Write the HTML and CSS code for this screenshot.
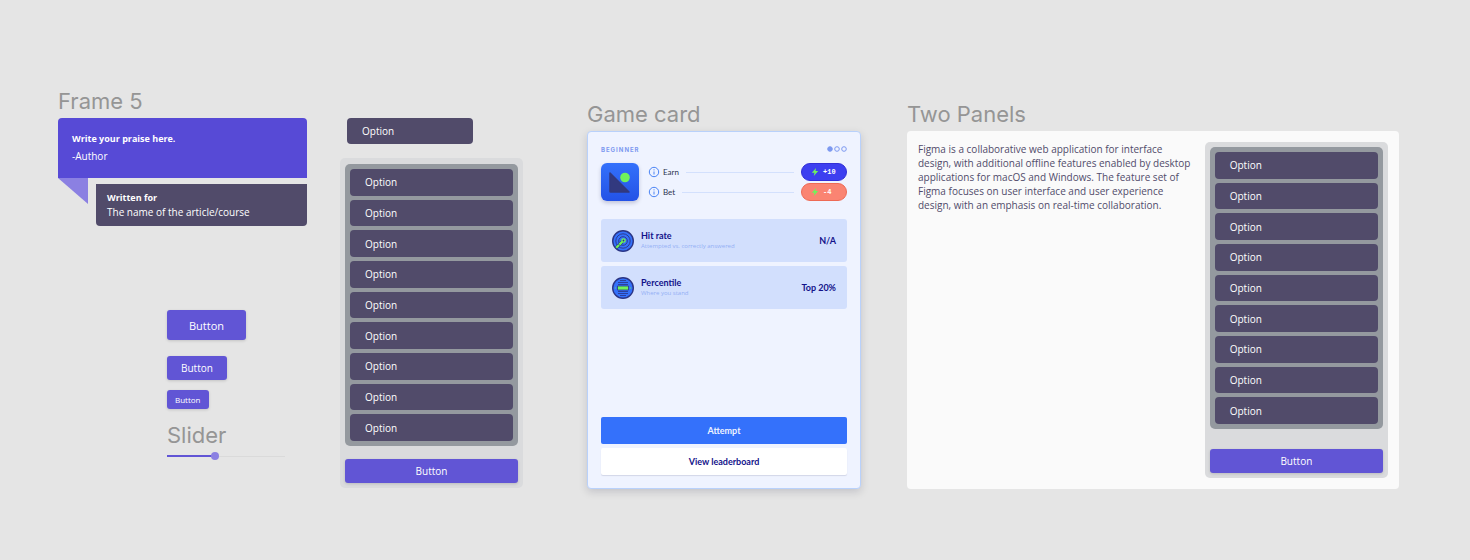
FILE: index.html
```
<!DOCTYPE html>
<html lang="en">
<head>
  <meta charset="UTF-8">
  <meta name="viewport" content="width=device-width, initial-scale=1.0">
  <title>Components</title>
  <link rel="stylesheet" href="styles.css">
</head>
<body>
<main class="board">
  <section class="col col-basics">
    <h2 class="frame-title">Frame 5</h2>
    <div class="praise">
      <p class="praise-text">Write your praise here.</p>
      <p class="praise-author">-Author</p>
    </div>
    <div class="praise-footer">
      <svg class="praise-tail" viewBox="0 0 30 26"><path d="M0 0h30v26z" fill="#8b80e2"/></svg>
      <div class="written-for">
        <strong>Written for</strong>
        <p>The name of the article/course</p>
      </div>
    </div>
    <div class="controls">
      <button class="btn btn-large">Button</button>
      <button class="btn btn-medium">Button</button>
      <button class="btn btn-small">Button</button>
      <label class="frame-title" for="slider">Slider</label>
      <input class="slider" id="slider" type="range" min="0" max="100" value="40">
    </div>
  </section>

  <section class="col col-menu">
    <button class="option option-single">Option</button>
    <div class="panel">
      <div class="option-list">
        <button class="option">Option</button>
        <button class="option">Option</button>
        <button class="option">Option</button>
        <button class="option">Option</button>
        <button class="option">Option</button>
        <button class="option">Option</button>
        <button class="option">Option</button>
        <button class="option">Option</button>
        <button class="option">Option</button>
      </div>
      <button class="btn btn-block">Button</button>
    </div>
  </section>

  <section class="col col-game">
    <h2 class="frame-title">Game card</h2>
    <div class="game-card">
      <div class="game-top">
        <span class="level">BEGINNER</span>
        <svg class="dots" width="20" height="6" viewBox="0 0 20 6" fill="none" stroke="#7d99f0">
          <circle cx="3" cy="3" r="2.3" fill="#7d99f0"/>
          <circle cx="10" cy="3" r="2.3"/>
          <circle cx="17" cy="3" r="2.3"/>
        </svg>
      </div>
      <div class="game-info">
        <div class="game-logo">
          <svg width="38" height="38" viewBox="0 0 38 38">
            <path d="M9 10v18.500q0 .5.500.500h18.500z" fill="#32397f" stroke="#32397f" stroke-width="1.500" stroke-linejoin="round"/>
            <circle cx="24" cy="14.500" r="4.800" fill="#70f35c"/>
          </svg>
        </div>
        <div class="stakes">
          <div class="stake">
            <svg class="info-icon" viewBox="0 0 12 12" fill="none" stroke="#4a83f5"><circle cx="6" cy="6" r="4.700"/><path d="M6 5.500v3M6 3.300v1.100"/></svg>
            <span>Earn</span>
            <hr>
            <span class="pill pill-earn">
              <svg viewBox="0 0 8 8"><path d="M5 0 .8 4.800h2.700L2.800 8l4.400-4.900H4.500z" fill="#70f35c"/></svg>+10
            </span>
          </div>
          <div class="stake">
            <svg class="info-icon" viewBox="0 0 12 12" fill="none" stroke="#4a83f5"><circle cx="6" cy="6" r="4.700"/><path d="M6 5.500v3M6 3.300v1.100"/></svg>
            <span>Bet</span>
            <hr>
            <span class="pill pill-bet">
              <svg viewBox="0 0 8 8"><path d="M5 0 .8 4.800h2.700L2.800 8l4.400-4.900H4.500z" fill="#70f35c"/></svg>-4
            </span>
          </div>
        </div>
      </div>
      <div class="stats">
        <div class="stat">
          <svg class="stat-icon" viewBox="0 0 22 22" fill="none" stroke="#2b3585">
            <circle cx="11" cy="11" r="10.300" fill="#3471fb" stroke-width="1.400"/>
            <circle cx="11" cy="11" r="7.200" stroke-width=".9"/>
            <circle cx="11" cy="11" r="4.300" stroke-width=".9"/>
            <path d="M4.200 17.800 11 11" stroke-width="3.200"/>
            <path d="M4.200 17.800 10.500 11.500" stroke="#70f35c" stroke-width="2.200" stroke-dasharray="4 .5"/>
            <circle cx="11.500" cy="10.500" r="1.600" fill="#2b3585" stroke="#70f35c" stroke-width="1.400"/>
          </svg>
          <div class="stat-text">
            <h3>Hit rate</h3>
            <p>Attempted vs. correctly answered</p>
          </div>
          <span class="stat-value">N/A</span>
        </div>
        <div class="stat">
          <svg class="stat-icon" viewBox="0 0 22 22" fill="none" stroke="#2b3585">
            <circle cx="11" cy="11" r="10.300" fill="#3471fb" stroke-width="1.400"/>
            <path d="M8 3.500h6M6 5.500h10M6 7.500h10M6 14.500h10M6 16.500h10M8 18.500h6" stroke-width=".8"/>
            <path d="M5.500 9h11v4h-11z" fill="#70f35c" stroke-width=".8"/>
            <path d="M2.800 11h1M18.200 11h1" stroke="#70f35c"/>
          </svg>
          <div class="stat-text">
            <h3>Percentile</h3>
            <p>Where you stand</p>
          </div>
          <span class="stat-value">Top 20%</span>
        </div>
      </div>
      <div class="game-actions">
        <button class="attempt">Attempt</button>
        <button class="leaderboard">View leaderboard</button>
      </div>
    </div>
  </section>

  <section class="col col-panels">
    <h2 class="frame-title">Two Panels</h2>
    <div class="two-panels">
      <p class="article">Figma is a collaborative web application for interface design, with additional offline features enabled by desktop applications for macOS and Windows. The feature set of Figma focuses on user interface and user experience design, with an emphasis on real-time collaboration.</p>
      <div class="panel">
        <div class="option-list">
          <button class="option">Option</button>
          <button class="option">Option</button>
          <button class="option">Option</button>
          <button class="option">Option</button>
          <button class="option">Option</button>
          <button class="option">Option</button>
          <button class="option">Option</button>
          <button class="option">Option</button>
          <button class="option">Option</button>
        </div>
        <button class="btn btn-block">Button</button>
      </div>
    </div>
  </section>
</main>
</body>
</html>
```
FILE: styles.css
```
* {
  box-sizing: border-box;
}

body {
  margin: 0;
  background-color: #e5e5e5;
  font-family: 'Open Sans', sans-serif;
  font-size: 10px;
}

h2, h3, p {
  margin: 0;
}

button {
  border: none;
  font-family: inherit;
  cursor: pointer;
}

.board {
  display: flex;
  align-items: flex-start;
  padding: 85px 71px 32px 58px;
}

.col {
  min-width: 0;
}

.frame-title {
  color: #959595;
  font-family: 'Inter', sans-serif;
  font-size: 22px;
  font-weight: 400;
  line-height: 33px;
  white-space: nowrap;
}

/* praise + controls */
.col-basics {
  flex: 249 1 0;
}

.praise {
  height: 60px;
  padding: 14px;
  border-radius: 4px 4px 0 0;
  background-color: #574ad6;
  color: white;
  font-size: 9px;
  line-height: 14px;
}

.praise-text {
  margin-bottom: 3px;
  font-weight: 700;
}

.praise-author {
  font-size: 10px;
}

.praise-footer {
  display: flex;
  align-items: flex-start;
  gap: 8px;
}

.praise-tail {
  width: 30px;
  height: 26px;
}

.written-for {
  flex: 1;
  margin-top: 6px;
  padding: 7px 11px;
  border-radius: 0 0 4px 4px;
  background-color: #514b6a;
  color: white;
  line-height: 14px;
}

.written-for strong {
  display: block;
  font-size: 9px;
}

.controls {
  display: flex;
  flex-direction: column;
  align-items: flex-start;
  margin: 84px 22px 0 109px;
}

.btn {
  border-radius: 3px;
  background-color: #6155d5;
  box-shadow: 0 1px 3px rgba(0, 0, 0, 0.15);
  color: white;
  font-size: 10px;
}

.btn-large {
  height: 30px;
  margin-bottom: 16px;
  padding: 0 22px;
  font-size: 11px;
  font-weight: 500;
}

.btn-medium {
  height: 24px;
  margin-bottom: 10px;
  padding: 0 14px;
}

.btn-small {
  height: 19px;
  margin-bottom: 10px;
  padding: 0 8px;
  font-size: 8px;
  font-weight: 500;
}

.slider {
  width: 100%;
  height: 8px;
  margin: 0;
  appearance: none;
  background: linear-gradient(#6155d5, #6155d5) left center / 40% 2px no-repeat,
    linear-gradient(#dadada, #dadada) center / 100% 1px no-repeat;
}

.slider::-webkit-slider-thumb {
  width: 8px;
  height: 8px;
  appearance: none;
  border-radius: 50%;
  background-color: #8b80e2;
}

/* options menu */
.col-menu {
  flex: 183 1 0;
  margin: 33px 0 0 33px;
}

.option {
  padding: 0 15px;
  border-radius: 4px;
  background-color: #514b6a;
  color: white;
  font-size: 10px;
  text-align: left;
}

.option-single {
  display: block;
  width: 126px;
  height: 26px;
  margin: 0 0 14px 7px;
}

.panel {
  padding: 6px 5px 5px;
  border-radius: 5px;
  background-color: #dadbdd;
}

.option-list {
  display: grid;
  gap: 4px;
  min-height: 282px;
  margin-bottom: 13px;
  padding: 5px;
  border-radius: 5px;
  background-color: #94999f;
}

.btn-block {
  display: block;
  width: 100%;
  height: 24px;
}

/* game card */
.col-game {
  flex: 274 1 0;
  margin: 13px 0 0 64px;
}

.game-card {
  display: flex;
  flex-direction: column;
  min-height: 358px;
  padding: 13px;
  border: 1px solid #b9d1fb;
  border-radius: 4px;
  background-color: #eff3ff;
  box-shadow: 0 3px 8px rgba(0, 0, 40, 0.15);
  font-family: 'Lato', sans-serif;
}

.game-top {
  display: flex;
  align-items: center;
  justify-content: space-between;
  height: 8px;
  margin-bottom: 10px;
}

.level {
  color: #7d99f0;
  font-family: 'Inter', sans-serif;
  font-size: 6px;
  font-weight: 700;
  letter-spacing: 1px;
}

.game-info {
  display: flex;
  gap: 9px;
}

.game-logo {
  width: 38px;
  height: 38px;
  border-radius: 6px;
  background: linear-gradient(#3471fb, #2352e6);
  box-shadow: 0 2px 4px rgba(0, 0, 60, 0.2);
}

.stakes {
  display: grid;
  flex: 1;
  gap: 2px;
}

.stake {
  display: flex;
  align-items: center;
  color: #2c3350;
  font-size: 8px;
}

.info-icon {
  width: 12px;
  height: 12px;
  margin-right: 3px;
}

.stake hr {
  flex: 1;
  margin: 0 7px;
  border: none;
  border-top: 1px solid #d3e0fd;
}

.pill {
  display: flex;
  align-items: center;
  gap: 4px;
  width: 46px;
  height: 18px;
  padding-left: 9px;
  border: 1px solid #322fd6;
  border-radius: 9px;
  background-color: #3d3ff0;
  color: white;
  font-family: 'Liberation Mono', monospace;
  font-size: 7px;
  font-weight: 700;
}

.pill svg {
  width: 8px;
  height: 8px;
}

.pill-bet {
  border-color: #ee6a55;
  background-color: #fa8472;
}

.stats {
  display: grid;
  gap: 4px;
  margin-top: 18px;
}

.stat {
  display: flex;
  align-items: center;
  gap: 7px;
  height: 43px;
  padding: 0 11px;
  border-radius: 3px;
  background-color: #d2dffd;
}

.stat-icon {
  width: 22px;
  height: 22px;
}

.stat-text {
  flex: 1;
}

.stat h3,
.stat-value {
  color: #12128a;
  font-size: 9px;
  font-weight: 700;
  line-height: 12px;
}

.stat p {
  color: #94b0f5;
  font-family: 'Open Sans', sans-serif;
  font-size: 6px;
  line-height: 9px;
}

.game-actions {
  display: grid;
  gap: 4px;
  margin-top: auto;
}

.game-actions button {
  height: 27px;
  border-radius: 2px;
  font-size: 9px;
  font-weight: 700;
}

.attempt {
  background-color: #3471fb;
  color: #eff3ff;
}

.leaderboard {
  background-color: white;
  box-shadow: 0 1px 1px rgba(0, 0, 60, 0.12);
  color: #12128a;
}

/* two panels */
.col-panels {
  flex: 492 1 0;
  margin: 13px 0 0 46px;
}

.two-panels {
  display: flex;
  gap: 12px;
  padding: 11px;
  border-radius: 4px;
  background-color: #fafafa;
}

.article {
  flex: 1;
  color: #514b6a;
  font-size: 10px;
  line-height: 14px;
}

.two-panels .panel {
  flex: 0 0 39%;
  padding-top: 5px;
}

.two-panels .option-list {
  margin-bottom: 20px;
}
```
